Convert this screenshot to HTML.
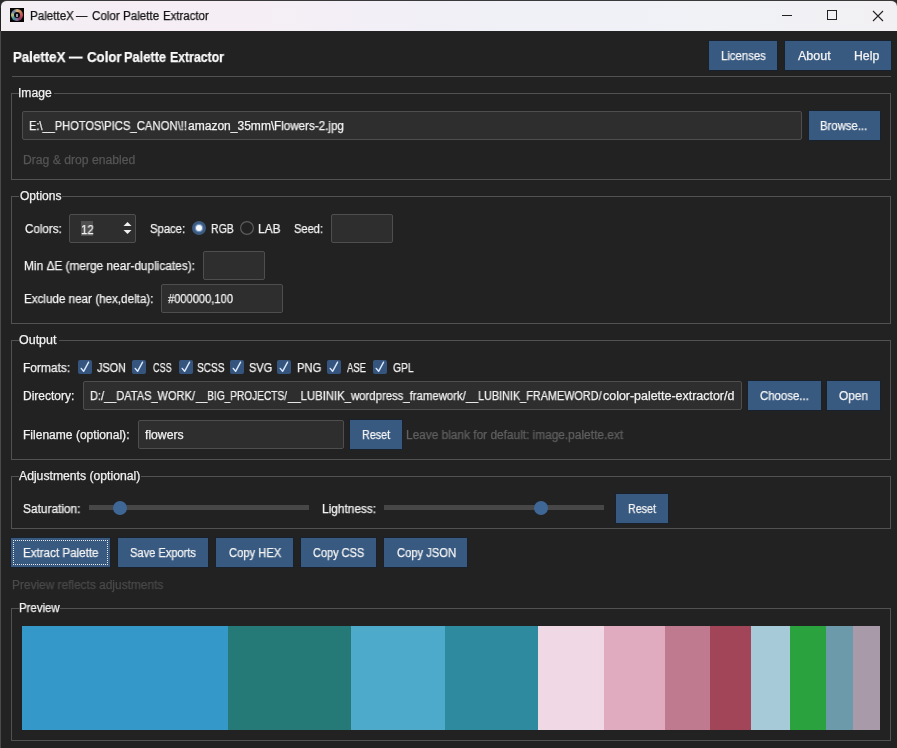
<!DOCTYPE html>
<html><head><meta charset="utf-8">
<style>
*{margin:0;padding:0;box-sizing:border-box}
html,body{width:897px;height:748px;overflow:hidden;background:#222222}
body{position:relative;-webkit-font-smoothing:antialiased;font-family:"Liberation Sans",sans-serif;font-size:12px;color:#f2f2f2}
.a{position:absolute}
.t{position:absolute;white-space:nowrap;line-height:1;will-change:transform;-webkit-text-stroke:0.25px currentColor}
#tb{position:absolute;left:1px;top:0;width:896px;height:31px;background:linear-gradient(90deg,#f3eff3 0%,#f6eef5 25%,#f0f0f7 55%,#f0f2f6 80%,#f2f0f3 100%);border-top:1px solid #3a3a3a;border-radius:6px 6px 0 0}
.btn{position:absolute;background:#385a80;box-shadow:0 0 0 1px #19212c}
.gb{position:absolute;border:1px solid #525252}
.gl{position:absolute;height:3px;background:#222222}
.inp{position:absolute;background:#2e2e2e;border:1px solid #4e4e4e;border-radius:2px}
.cb{position:absolute;width:14px;height:14px;background:#36557e;border-radius:2px}
.cb svg{position:absolute;left:0;top:0}
.sw{position:absolute;top:626px;height:104px}
</style></head><body>
<div class="a" style="left:0;top:0;width:897px;height:8px;background:#2a2a2a"></div>
<div class="a" style="left:0;top:31px;width:1px;height:717px;background:#4a4a4a"></div>
<div id="tb">
  <div class="a" style="left:9px;top:7px;width:14px;height:14px;background:#050505;overflow:hidden">
    <div class="a" style="left:1px;top:1px;width:12px;height:12px;border-radius:50%;background:conic-gradient(from 0deg,#d9b878 0deg,#c8705a 60deg,#c04858 100deg,#7a3a5a 150deg,#8a6a9a 180deg,#3a8a9a 220deg,#b8c880 270deg,#6078a8 320deg,#d9b878 360deg);filter:blur(0.6px)"></div>
    <div class="a" style="left:4px;top:4px;width:6px;height:6px;border-radius:50%;background:#0a0a10"></div>
    <div class="a" style="left:6px;top:6px;width:2px;height:2.5px;background:#9a9aa8"></div>
  </div>
  <div class="a" style="left:781px;top:14px;width:10px;height:1px;background:#222"></div>
  <div class="a" style="left:826px;top:9px;width:10px;height:10px;border:1px solid #222"></div>
  <svg class="a" style="left:871px;top:9px" width="12" height="12" viewBox="0 0 12 12"><path d="M1 1L11 11M11 1L1 11" stroke="#222" stroke-width="1.1"/></svg>
</div>

<div class="btn" style="left:709px;top:41px;width:68px;height:29px"></div>
<div class="btn" style="left:785px;top:41px;width:106px;height:29px"></div>
<div class="a" style="left:12px;top:76px;width:879px;height:1px;background:#525252"></div>

<!-- Image group -->
<div class="gb" style="left:11px;top:93px;width:880px;height:87px"></div>
<div class="gl" style="left:19px;top:92px;width:35px"></div>
<div class="inp" style="left:22px;top:111px;width:780px;height:29px"></div>
<div class="btn" style="left:809px;top:111px;width:71px;height:29px"></div>

<!-- Options group -->
<div class="gb" style="left:11px;top:196px;width:880px;height:128px"></div>
<div class="gl" style="left:19px;top:195px;width:43px"></div>
<div class="inp" style="left:69px;top:214px;width:67px;height:29px">
  <div class="a" style="left:11px;top:6px;width:12px;height:15px;background:#505050"></div>
  <svg class="a" style="left:52.8px;top:6px" width="9" height="14" viewBox="0 0 9 14"><path d="M0.5 5L4.5 1L8.5 5Z M0.5 9L4.5 13L8.5 9Z" fill="#f0f0f0"/></svg>
</div>
<svg class="a" style="left:192px;top:221px" width="14" height="14" viewBox="0 0 14 14"><circle cx="7" cy="7" r="7" fill="#3c5b81"/><circle cx="7" cy="7" r="4.3" fill="#7192bd"/><circle cx="7" cy="7" r="3" fill="#f6f8fa"/></svg>
<svg class="a" style="left:240px;top:221px" width="14" height="14" viewBox="0 0 14 14"><circle cx="7" cy="7" r="6.4" fill="none" stroke="#5c5c5c" stroke-width="1.2"/></svg>
<div class="inp" style="left:331px;top:214px;width:62px;height:29px"></div>
<div class="inp" style="left:203px;top:251px;width:62px;height:29px"></div>
<div class="inp" style="left:161px;top:284px;width:122px;height:29px"></div>

<!-- Output group -->
<div class="gb" style="left:11px;top:340px;width:880px;height:120px"></div>
<div class="gl" style="left:19px;top:339px;width:40px"></div>
<div class="cb" style="left:78px;top:360px"><svg width="14" height="14" viewBox="0 0 14 14"><path d="M3.2 8.4L5.6 11.3L10.6 2.2" stroke="#dcecff" stroke-width="1.4" fill="none" stroke-linecap="round" stroke-linejoin="round"/></svg></div>
<div class="cb" style="left:132px;top:360px"><svg width="14" height="14" viewBox="0 0 14 14"><path d="M3.2 8.4L5.6 11.3L10.6 2.2" stroke="#dcecff" stroke-width="1.4" fill="none" stroke-linecap="round" stroke-linejoin="round"/></svg></div>
<div class="cb" style="left:179px;top:360px"><svg width="14" height="14" viewBox="0 0 14 14"><path d="M3.2 8.4L5.6 11.3L10.6 2.2" stroke="#dcecff" stroke-width="1.4" fill="none" stroke-linecap="round" stroke-linejoin="round"/></svg></div>
<div class="cb" style="left:230px;top:360px"><svg width="14" height="14" viewBox="0 0 14 14"><path d="M3.2 8.4L5.6 11.3L10.6 2.2" stroke="#dcecff" stroke-width="1.4" fill="none" stroke-linecap="round" stroke-linejoin="round"/></svg></div>
<div class="cb" style="left:277px;top:360px"><svg width="14" height="14" viewBox="0 0 14 14"><path d="M3.2 8.4L5.6 11.3L10.6 2.2" stroke="#dcecff" stroke-width="1.4" fill="none" stroke-linecap="round" stroke-linejoin="round"/></svg></div>
<div class="cb" style="left:327px;top:360px"><svg width="14" height="14" viewBox="0 0 14 14"><path d="M3.2 8.4L5.6 11.3L10.6 2.2" stroke="#dcecff" stroke-width="1.4" fill="none" stroke-linecap="round" stroke-linejoin="round"/></svg></div>
<div class="cb" style="left:373px;top:360px"><svg width="14" height="14" viewBox="0 0 14 14"><path d="M3.2 8.4L5.6 11.3L10.6 2.2" stroke="#dcecff" stroke-width="1.4" fill="none" stroke-linecap="round" stroke-linejoin="round"/></svg></div>
<div class="inp" style="left:83px;top:381px;width:659px;height:29px"></div>
<div class="btn" style="left:748px;top:381px;width:73px;height:29px"></div>
<div class="btn" style="left:827px;top:381px;width:53px;height:29px"></div>
<div class="inp" style="left:138px;top:420px;width:206px;height:29px"></div>
<div class="btn" style="left:350px;top:420px;width:52px;height:29px"></div>

<!-- Adjustments group -->
<div class="gb" style="left:11px;top:476px;width:880px;height:53px"></div>
<div class="gl" style="left:19px;top:475px;width:122px"></div>
<div class="a" style="left:89px;top:505px;width:220px;height:5px;background:#474747"></div>
<div class="a" style="left:113px;top:501px;width:14px;height:14px;border-radius:50%;background:#3f6796"></div>
<div class="a" style="left:384px;top:505px;width:220px;height:5px;background:#474747"></div>
<div class="a" style="left:534px;top:501px;width:14px;height:14px;border-radius:50%;background:#3f6796"></div>
<div class="btn" style="left:616px;top:494px;width:52px;height:29px"></div>

<!-- action buttons -->
<div class="btn" style="left:11px;top:538px;width:99px;height:29px"><div class="a" style="left:2px;top:2px;right:2px;bottom:2px;border:1px dotted #e8e8e8"></div></div>
<div class="btn" style="left:118px;top:538px;width:90px;height:29px"></div>
<div class="btn" style="left:216px;top:538px;width:77px;height:29px"></div>
<div class="btn" style="left:301px;top:538px;width:75px;height:29px"></div>
<div class="btn" style="left:384px;top:538px;width:83px;height:29px"></div>

<!-- Preview group -->
<div class="gb" style="left:11px;top:608px;width:880px;height:133px"></div>
<div class="gl" style="left:19px;top:607px;width:41px"></div>
<div class="sw" style="left:22px;width:206px;background:#3498c9"></div>
<div class="sw" style="left:228px;width:123px;background:#257a78"></div>
<div class="sw" style="left:351px;width:94px;background:#4eaacb"></div>
<div class="sw" style="left:445px;width:93px;background:#2e8a9e"></div>
<div class="sw" style="left:538px;width:66px;background:#f0d8e4"></div>
<div class="sw" style="left:604px;width:61px;background:#e0aabf"></div>
<div class="sw" style="left:665px;width:45px;background:#c07a90"></div>
<div class="sw" style="left:710px;width:41px;background:#a24558"></div>
<div class="sw" style="left:751px;width:39px;background:#a6cad8"></div>
<div class="sw" style="left:790px;width:36px;background:#2aa33e"></div>
<div class="sw" style="left:826px;width:27px;background:#6d9aaa"></div>
<div class="sw" style="left:853px;width:27px;background:#a99aaa"></div>
<span class="t" id="title1" style="left:30.28px;top:10.00px;font-size:12px;font-weight:normal;color:#141414;letter-spacing:0.000px;transform:scaleX(0.9685);transform-origin:0 0">PaletteX</span>
<span class="t" id="title2" style="left:75.94px;top:10.00px;font-size:12px;font-weight:normal;color:#141414;letter-spacing:0.000px;transform:scaleX(0.9537);transform-origin:0 0">—</span>
<span class="t" id="title3" style="left:92.02px;top:10.00px;font-size:12px;font-weight:normal;color:#141414;letter-spacing:0.000px;transform:scaleX(0.9668);transform-origin:0 0">Color</span>
<span class="t" id="title4" style="left:122.96px;top:10.00px;font-size:12px;font-weight:normal;color:#141414;letter-spacing:0.000px;transform:scaleX(0.9674);transform-origin:0 0">Palette</span>
<span class="t" id="title5" style="left:163.12px;top:10.00px;font-size:12px;font-weight:normal;color:#141414;letter-spacing:0.000px;transform:scaleX(0.9536);transform-origin:0 0">Extractor</span>
<span class="t" id="hdr1" style="left:12.70px;top:50.00px;font-size:14px;font-weight:bold;color:#fafafa;letter-spacing:0.000px;transform:scaleX(0.9485);transform-origin:0 0">PaletteX</span>
<span class="t" id="hdr2" style="left:69.10px;top:50.00px;font-size:14px;font-weight:bold;color:#fafafa;letter-spacing:0.000px;transform:scaleX(0.9604);transform-origin:0 0">—</span>
<span class="t" id="hdr3" style="left:87.00px;top:50.00px;font-size:14px;font-weight:bold;color:#fafafa;letter-spacing:0.000px;transform:scaleX(0.9472);transform-origin:0 0">Color</span>
<span class="t" id="hdr4" style="left:124.00px;top:50.00px;font-size:14px;font-weight:bold;color:#fafafa;letter-spacing:0.000px;transform:scaleX(0.9172);transform-origin:0 0">Palette</span>
<span class="t" id="hdr5" style="left:170.10px;top:50.00px;font-size:14px;font-weight:bold;color:#fafafa;letter-spacing:0.000px;transform:scaleX(0.8776);transform-origin:0 0">Extractor</span>
<span class="t" id="lic" style="left:720.81px;top:50.00px;font-size:12px;font-weight:normal;color:#f4f4f4;letter-spacing:0.000px;transform:scaleX(0.9473);transform-origin:0 0">Licenses</span>
<span class="t" id="about" style="left:797.88px;top:50.00px;font-size:12px;font-weight:normal;color:#f4f4f4;letter-spacing:0.000px;transform:scaleX(1.0418);transform-origin:0 0">About</span>
<span class="t" id="help" style="left:853.59px;top:50.00px;font-size:12px;font-weight:normal;color:#f4f4f4;letter-spacing:0.000px;transform:scaleX(1.0219);transform-origin:0 0">Help</span>
<span class="t" id="gImage" style="left:18.47px;top:87.00px;font-size:12px;font-weight:normal;color:#f2f2f2;letter-spacing:0.000px;transform:scaleX(1.0093);transform-origin:0 0">Image</span>
<span class="t" id="path1" style="left:28.92px;top:120.00px;font-size:12px;font-weight:normal;color:#f2f2f2;letter-spacing:0.000px;transform:scaleX(0.9211);transform-origin:0 0">E:\__PHOTOS\</span>
<span class="t" id="path2" style="left:104.14px;top:120.00px;font-size:12px;font-weight:normal;color:#f2f2f2;letter-spacing:0.000px;transform:scaleX(0.9443);transform-origin:0 0">PICS_CANON\!!</span>
<span class="t" id="path3" style="left:187.88px;top:120.00px;font-size:12px;font-weight:normal;color:#f2f2f2;letter-spacing:0.000px;transform:scaleX(1.0025);transform-origin:0 0">amazon_35mm\</span>
<span class="t" id="path4" style="left:274.20px;top:120.00px;font-size:12px;font-weight:normal;color:#f2f2f2;letter-spacing:0.000px;transform:scaleX(0.9717);transform-origin:0 0">Flowers-2.jpg</span>
<span class="t" id="browse" style="left:820.42px;top:120.00px;font-size:12px;font-weight:normal;color:#f4f4f4;letter-spacing:0.000px;transform:scaleX(0.9443);transform-origin:0 0">Browse...</span>
<span class="t" id="drag" style="left:23.20px;top:154.00px;font-size:12px;font-weight:normal;color:#555555;letter-spacing:0.000px;transform:scaleX(1.0140);transform-origin:0 0">Drag &amp; drop enabled</span>
<span class="t" id="gOptions" style="left:19.71px;top:190.00px;font-size:12px;font-weight:normal;color:#f2f2f2;letter-spacing:0.000px;transform:scaleX(1.0041);transform-origin:0 0">Options</span>
<span class="t" id="colors" style="left:24.71px;top:223.00px;font-size:12px;font-weight:normal;color:#f2f2f2;letter-spacing:0.000px;transform:scaleX(0.9652);transform-origin:0 0">Colors:</span>
<span class="t" id="twelve" style="left:80.81px;top:224.00px;font-size:12px;font-weight:normal;color:#f2f2f2;letter-spacing:0.000px;transform:scaleX(0.9450);transform-origin:0 0">12</span>
<span class="t" id="space" style="left:149.59px;top:223.00px;font-size:12px;font-weight:normal;color:#f2f2f2;letter-spacing:0.000px;transform:scaleX(0.9400);transform-origin:0 0">Space:</span>
<span class="t" id="rgb" style="left:210.86px;top:223.00px;font-size:12px;font-weight:normal;color:#f2f2f2;letter-spacing:0.000px;transform:scaleX(0.8730);transform-origin:0 0">RGB</span>
<span class="t" id="lab" style="left:258.47px;top:223.00px;font-size:12px;font-weight:normal;color:#f2f2f2;letter-spacing:0.000px;transform:scaleX(0.9888);transform-origin:0 0">LAB</span>
<span class="t" id="seed" style="left:294.42px;top:223.00px;font-size:12px;font-weight:normal;color:#f2f2f2;letter-spacing:0.000px;transform:scaleX(0.9224);transform-origin:0 0">Seed:</span>
<span class="t" id="minde" style="left:23.81px;top:260.00px;font-size:12px;font-weight:normal;color:#f2f2f2;letter-spacing:0.000px;transform:scaleX(0.9896);transform-origin:0 0">Min ΔE (merge near-duplicates):</span>
<span class="t" id="excl" style="left:23.81px;top:293.00px;font-size:12px;font-weight:normal;color:#f2f2f2;letter-spacing:0.000px;transform:scaleX(0.9704);transform-origin:0 0">Exclude near (hex,delta):</span>
<span class="t" id="exclv" style="left:167.88px;top:293.00px;font-size:12px;font-weight:normal;color:#f2f2f2;letter-spacing:0.000px;transform:scaleX(0.9264);transform-origin:0 0">#000000,100</span>
<span class="t" id="gOutput" style="left:19.15px;top:334.00px;font-size:12px;font-weight:normal;color:#f2f2f2;letter-spacing:0.000px;transform:scaleX(1.0391);transform-origin:0 0">Output</span>
<span class="t" id="formats" style="left:23.42px;top:362.00px;font-size:12px;font-weight:normal;color:#f2f2f2;letter-spacing:0.000px;transform:scaleX(0.9940);transform-origin:0 0">Formats:</span>
<span class="t" id="fJSON" style="left:97.15px;top:362.00px;font-size:12px;font-weight:normal;color:#f2f2f2;letter-spacing:0.000px;transform:scaleX(0.9032);transform-origin:0 0">JSON</span>
<span class="t" id="fCSS" style="left:152.54px;top:362.00px;font-size:12px;font-weight:normal;color:#f2f2f2;letter-spacing:0.000px;transform:scaleX(0.7583);transform-origin:0 0">CSS</span>
<span class="t" id="fSCSS" style="left:197.25px;top:362.00px;font-size:12px;font-weight:normal;color:#f2f2f2;letter-spacing:0.000px;transform:scaleX(0.8391);transform-origin:0 0">SCSS</span>
<span class="t" id="fSVG" style="left:248.86px;top:362.00px;font-size:12px;font-weight:normal;color:#f2f2f2;letter-spacing:0.000px;transform:scaleX(0.9146);transform-origin:0 0">SVG</span>
<span class="t" id="fPNG" style="left:296.98px;top:362.00px;font-size:12px;font-weight:normal;color:#f2f2f2;letter-spacing:0.000px;transform:scaleX(0.9308);transform-origin:0 0">PNG</span>
<span class="t" id="fASE" style="left:347.49px;top:362.00px;font-size:12px;font-weight:normal;color:#f2f2f2;letter-spacing:0.000px;transform:scaleX(0.7903);transform-origin:0 0">ASE</span>
<span class="t" id="fGPL" style="left:393.32px;top:362.00px;font-size:12px;font-weight:normal;color:#f2f2f2;letter-spacing:0.000px;transform:scaleX(0.8594);transform-origin:0 0">GPL</span>
<span class="t" id="dirl" style="left:23.42px;top:390.00px;font-size:12px;font-weight:normal;color:#f2f2f2;letter-spacing:0.000px;transform:scaleX(1.0004);transform-origin:0 0">Directory:</span>
<span class="t" id="dirv1" style="left:89.70px;top:390.00px;font-size:12px;font-weight:normal;color:#f2f2f2;letter-spacing:0.000px;transform:scaleX(0.9177);transform-origin:0 0">D:/__DATAS_WORK/</span>
<span class="t" id="dirv2" style="left:195.60px;top:390.00px;font-size:12px;font-weight:normal;color:#f2f2f2;letter-spacing:0.000px;transform:scaleX(0.8423);transform-origin:0 0">__BIG_PROJECTS/</span>
<span class="t" id="dirv3" style="left:287.60px;top:390.00px;font-size:12px;font-weight:normal;color:#f2f2f2;letter-spacing:0.000px;transform:scaleX(0.9451);transform-origin:0 0">__LUBINIK_wordpress_framework/</span>
<span class="t" id="dirv4" style="left:466.10px;top:390.00px;font-size:12px;font-weight:normal;color:#f2f2f2;letter-spacing:0.000px;transform:scaleX(0.9034);transform-origin:0 0">__LUBINIK_FRAMEWORD/</span>
<span class="t" id="dirv5" style="left:603.38px;top:390.00px;font-size:12px;font-weight:normal;color:#f2f2f2;letter-spacing:0.000px;transform:scaleX(1.0366);transform-origin:0 0">color-palette-extractor/d</span>
<span class="t" id="choose" style="left:760.32px;top:390.00px;font-size:12px;font-weight:normal;color:#f4f4f4;letter-spacing:0.000px;transform:scaleX(0.9494);transform-origin:0 0">Choose...</span>
<span class="t" id="open" style="left:839.15px;top:390.00px;font-size:12px;font-weight:normal;color:#f4f4f4;letter-spacing:0.000px;transform:scaleX(0.9867);transform-origin:0 0">Open</span>
<span class="t" id="fnl" style="left:23.42px;top:429.00px;font-size:12px;font-weight:normal;color:#f2f2f2;letter-spacing:0.000px;transform:scaleX(1.0041);transform-origin:0 0">Filename (optional):</span>
<span class="t" id="fnv" style="left:145.10px;top:429.00px;font-size:12px;font-weight:normal;color:#f2f2f2;letter-spacing:0.000px;transform:scaleX(1.0154);transform-origin:0 0">flowers</span>
<span class="t" id="reset1" style="left:361.98px;top:429.00px;font-size:12px;font-weight:normal;color:#f4f4f4;letter-spacing:0.000px;transform:scaleX(0.8973);transform-origin:0 0">Reset</span>
<span class="t" id="leave" style="left:406.47px;top:429.00px;font-size:12px;font-weight:normal;color:#606060;letter-spacing:0.000px;transform:scaleX(0.9886);transform-origin:0 0">Leave blank for default: image.palette.ext</span>
<span class="t" id="gAdj" style="left:19.49px;top:470.00px;font-size:12px;font-weight:normal;color:#f2f2f2;letter-spacing:0.000px;transform:scaleX(1.0162);transform-origin:0 0">Adjustments (optional)</span>
<span class="t" id="sat" style="left:23.03px;top:503.00px;font-size:12px;font-weight:normal;color:#f2f2f2;letter-spacing:0.000px;transform:scaleX(0.9901);transform-origin:0 0">Saturation:</span>
<span class="t" id="light" style="left:321.86px;top:503.00px;font-size:12px;font-weight:normal;color:#f2f2f2;letter-spacing:0.000px;transform:scaleX(0.9894);transform-origin:0 0">Lightness:</span>
<span class="t" id="reset2" style="left:627.64px;top:503.00px;font-size:12px;font-weight:normal;color:#f4f4f4;letter-spacing:0.000px;transform:scaleX(0.8917);transform-origin:0 0">Reset</span>
<span class="t" id="extract" style="left:22.64px;top:547.00px;font-size:12px;font-weight:normal;color:#f4f4f4;letter-spacing:0.000px;transform:scaleX(0.9678);transform-origin:0 0">Extract Palette</span>
<span class="t" id="save" style="left:129.64px;top:547.00px;font-size:12px;font-weight:normal;color:#f4f4f4;letter-spacing:0.000px;transform:scaleX(0.9246);transform-origin:0 0">Save Exports</span>
<span class="t" id="chex" style="left:228.71px;top:547.00px;font-size:12px;font-weight:normal;color:#f4f4f4;letter-spacing:0.000px;transform:scaleX(0.9335);transform-origin:0 0">Copy HEX</span>
<span class="t" id="ccss" style="left:313.32px;top:547.00px;font-size:12px;font-weight:normal;color:#f4f4f4;letter-spacing:0.000px;transform:scaleX(0.9142);transform-origin:0 0">Copy CSS</span>
<span class="t" id="cjson" style="left:396.88px;top:547.00px;font-size:12px;font-weight:normal;color:#f4f4f4;letter-spacing:0.000px;transform:scaleX(0.9332);transform-origin:0 0">Copy JSON</span>
<span class="t" id="prevr" style="left:12.42px;top:579.00px;font-size:12px;font-weight:normal;color:#4a4a4a;letter-spacing:0.000px;transform:scaleX(0.9902);transform-origin:0 0">Preview reflects adjustments</span>
<span class="t" id="gPreview" style="left:18.64px;top:602.00px;font-size:12px;font-weight:normal;color:#f2f2f2;letter-spacing:0.000px;transform:scaleX(0.9517);transform-origin:0 0">Preview</span>
</body></html>
